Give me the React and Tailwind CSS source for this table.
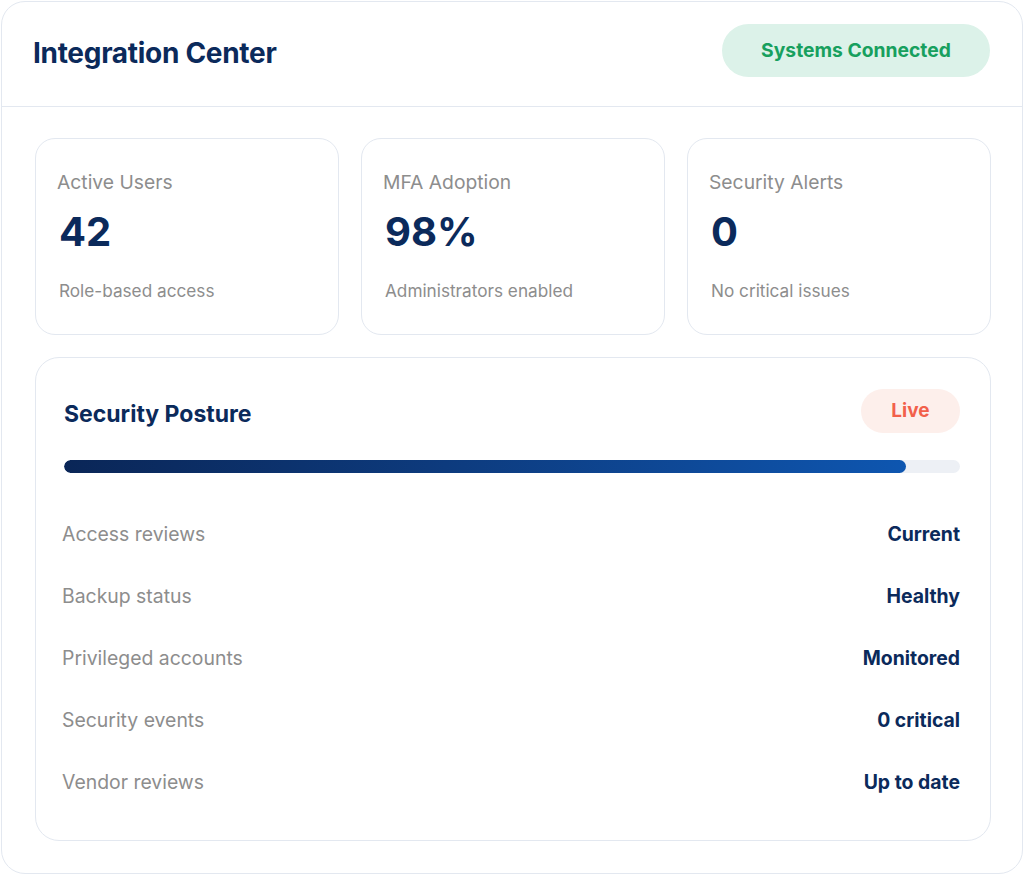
import React from "react";

const stats = [
  { label: "Active Users", value: "42", sub: "Role-based access" },
  { label: "MFA Adoption", value: "98%", sub: "Administrators enabled" },
  { label: "Security Alerts", value: "0", sub: "No critical issues" },
];

const rows = [
  ["Access reviews", "Current"],
  ["Backup status", "Healthy"],
  ["Privileged accounts", "Monitored"],
  ["Security events", "0 critical"],
  ["Vendor reviews", "Up to date"],
];

export default function App() {
  return (
    <div className="w-[1024px] h-[875px] bg-white p-px font-['Inter',sans-serif]">
      <div className="h-[873px] w-full rounded-[24px] border border-[#e3e8f0] bg-white flex flex-col">
        <div className="h-[105px] shrink-0 border-b border-[#e3e8f0] flex items-center justify-between pl-[31px] pr-8 pb-[7px]">
          <h1 className="mt-[4px] text-[28px] font-bold tracking-[-0.3px] text-[#0b2a5b]">Integration Center</h1>
          <div className="h-[53px] w-[268px] rounded-full bg-[#dcf2e9] flex items-center justify-center text-[19.3px] font-bold text-[#17a05e]">
            Systems Connected
          </div>
        </div>
        <div className="flex-1 flex flex-col gap-[22px] pl-[33px] pr-[31px] pt-[31px] pb-[32px]">
          <div className="grid grid-cols-3 gap-[22px]">
            {stats.map((s) => (
              <div key={s.label} className="h-[197px] rounded-[20px] border border-[#e3e8f0] px-[21px] pt-[30px]">
                <div className="text-[19.3px] text-[#8d8d8d] leading-[26px]">{s.label}</div>
                <div className="mt-[13px] text-[40px] font-bold text-[#0b2a5b] leading-[48px] pl-[2px]">{s.value}</div>
                <div className="mt-[23px] text-[17.2px] text-[#8d8d8d] leading-[24px] pl-[2px]">{s.sub}</div>
              </div>
            ))}
          </div>
          <div className="flex-1 rounded-[24px] border border-[#e3e8f0] pl-[28px] pr-[30px] pt-[31px]">
            <div className="flex items-start justify-between">
              <h2 className="mt-[9px] text-[23px] leading-[32px] font-bold text-[#0b2a5b]">Security Posture</h2>
              <div className="h-[44px] w-[99px] rounded-full bg-[#fdefeb] flex items-center justify-center text-[19px] font-bold text-[#f2604a]">
                Live
              </div>
            </div>
            <div className="mt-[27px] h-[13px] rounded-full bg-[#edf0f5] overflow-hidden">
              <div
                className="h-full rounded-full bg-gradient-to-r from-[#0a2657] to-[#0e56b0]"
                style={{ width: "94%" }}
              />
            </div>
            <div className="mt-[49px] ml-[-2px] flex flex-col gap-[36px]">
              {rows.map(([k, v]) => (
                <div key={k} className="flex items-center justify-between h-[26px]">
                  <span className="text-[19.4px] text-[#8d8d8d]">{k}</span>
                  <span className="text-[19.4px] font-bold text-[#0b2a5b]">{v}</span>
                </div>
              ))}
            </div>
          </div>
        </div>
      </div>
    </div>
  );
}
